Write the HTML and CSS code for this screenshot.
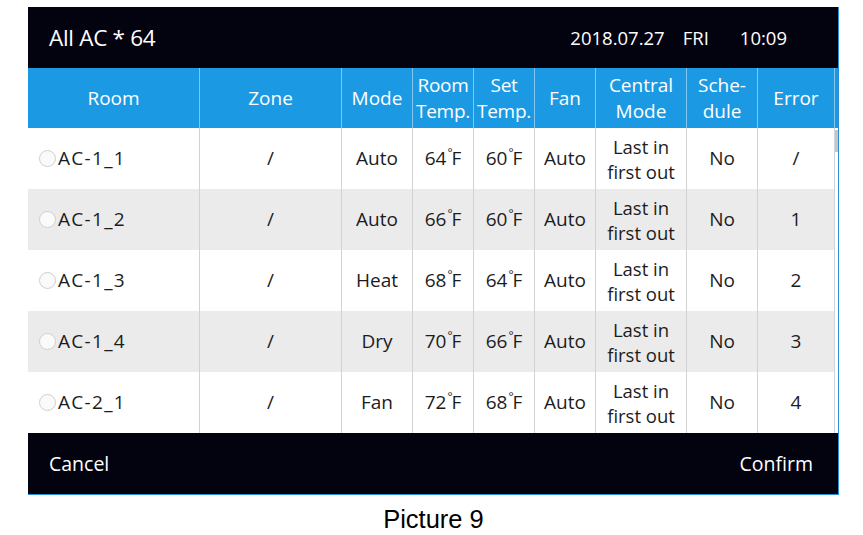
FILE: index.html
```html
<!DOCTYPE html>
<html>
<head>
<meta charset="utf-8">
<link rel="stylesheet" href="styles.css">
</head>
<body>
<div class="frame">
  <div class="topbar">
    <div class="title">All AC * 64</div>
    <div class="clock"><span class="date">2018.07.27</span><span class="day">FRI</span><span>10:09</span></div>
  </div>
  <div class="head">
    <div class="hc">Room</div>
    <div class="hc">Zone</div>
    <div class="hc">Mode</div>
    <div class="hc tight">Room<br>Temp.</div>
    <div class="hc tight">Set<br>Temp.</div>
    <div class="hc">Fan</div>
    <div class="hc">Central<br>Mode</div>
    <div class="hc">Sche-<br>dule</div>
    <div class="hc">Error</div>
    <div class="hc end"></div>
  </div>
  <div class="body">
    <div class="rows">
      <div class="row">
        <div class="c room"><span class="radio"></span>AC-1_1</div>
        <div class="c">/</div>
        <div class="c">Auto</div>
        <div class="c">64<span class="deg">°</span>F</div>
        <div class="c">60<span class="deg">°</span>F</div>
        <div class="c">Auto</div>
        <div class="c two">Last in<br>first out</div>
        <div class="c">No</div>
        <div class="c">/</div>
      </div>
      <div class="row alt">
        <div class="c room"><span class="radio"></span>AC-1_2</div>
        <div class="c">/</div>
        <div class="c">Auto</div>
        <div class="c">66<span class="deg">°</span>F</div>
        <div class="c">60<span class="deg">°</span>F</div>
        <div class="c">Auto</div>
        <div class="c two">Last in<br>first out</div>
        <div class="c">No</div>
        <div class="c">1</div>
      </div>
      <div class="row">
        <div class="c room"><span class="radio"></span>AC-1_3</div>
        <div class="c">/</div>
        <div class="c">Heat</div>
        <div class="c">68<span class="deg">°</span>F</div>
        <div class="c">64<span class="deg">°</span>F</div>
        <div class="c">Auto</div>
        <div class="c two">Last in<br>first out</div>
        <div class="c">No</div>
        <div class="c">2</div>
      </div>
      <div class="row alt">
        <div class="c room"><span class="radio"></span>AC-1_4</div>
        <div class="c">/</div>
        <div class="c">Dry</div>
        <div class="c">70<span class="deg">°</span>F</div>
        <div class="c">66<span class="deg">°</span>F</div>
        <div class="c">Auto</div>
        <div class="c two">Last in<br>first out</div>
        <div class="c">No</div>
        <div class="c">3</div>
      </div>
      <div class="row">
        <div class="c room"><span class="radio"></span>AC-2_1</div>
        <div class="c">/</div>
        <div class="c">Fan</div>
        <div class="c">72<span class="deg">°</span>F</div>
        <div class="c">68<span class="deg">°</span>F</div>
        <div class="c">Auto</div>
        <div class="c two">Last in<br>first out</div>
        <div class="c">No</div>
        <div class="c">4</div>
      </div>
    </div>
    <div class="scroll"><div class="thumb"></div></div>
  </div>
  <div class="footer">
    <div class="btn">Cancel</div>
    <div class="btn">Confirm</div>
  </div>
</div>
<div class="caption">Picture 9</div>
</body>
</html>
```
FILE: styles.css
```css
* { box-sizing: border-box; }
html, body { margin: 0; padding: 0; background: #fff; }
body { font-family: "Open Sans", "Noto Sans", sans-serif; color: #1c1c1c; }

.frame {
  width: 811px;
  margin: 7px 0 0 28px;
  border-right: 1px solid #2a8fd6;
  border-bottom: 1px solid #2a8fd6;
}

.topbar {
  height: 61px;
  background: #03020f;
  color: #fff;
  display: flex;
  align-items: center;
  justify-content: space-between;
  padding: 0 51px 0 21px;
}
.title { font-size: 22.5px; letter-spacing: -0.3px; }
.clock { display: flex; font-size: 18.5px; }
.date { margin-right: 18px; }
.day { margin-right: 31px; }

.head {
  height: 60px;
  background: #1b9ae3;
  color: #fff;
  display: grid;
  grid-template-columns: 172px 142px 71px 61px 61px 61px 91px 71px 77px 3px;
}
.hc {
  display: flex;
  align-items: center;
  justify-content: center;
  text-align: center;
  font-size: 19px;
  line-height: 26px;
  border-right: 1px solid rgba(255,255,255,0.45);
}
.hc.tight { letter-spacing: -0.3px; }
.hc.end { border-right: none; }

.body { display: flex; background: #fff; }
.rows { width: 807px; }
.row {
  height: 61px;
  display: grid;
  grid-template-columns: 172px 142px 71px 61px 61px 61px 91px 71px 77px;
  background: #fff;
}
.row.alt { background: #ebebeb; }
.c {
  display: flex;
  align-items: center;
  justify-content: center;
  text-align: center;
  font-size: 19px;
  line-height: 23px;
  border-right: 1px solid #d2d2d2;
}
.c.two { font-size: 18.5px; line-height: 25.5px; padding-top: 1px; }
.c.room { justify-content: flex-start; padding-left: 11px; letter-spacing: 1.3px; }
.radio {
  width: 17px;
  height: 17px;
  border: 1px solid #cfcfcf;
  border-radius: 50%;
  margin-right: 2px;
  background: #fafafa;
}
.deg { font-size: 12px; position: relative; top: -6px; margin: 0 -1px 0 1px; }

.scroll { width: 3px; position: relative; }
.thumb {
  position: absolute;
  left: 0;
  top: 2px;
  width: 3px;
  height: 22px;
  background: #c6c6c6;
}

.footer {
  height: 61px;
  background: #03020f;
  color: #fff;
  display: flex;
  align-items: center;
  justify-content: space-between;
  padding: 0 25px 0 21px;
  font-size: 19.5px;
}

.caption {
  text-align: center;
  font-family: "Liberation Sans", Arial, sans-serif;
  font-size: 25.5px;
  margin-top: 10px;
  color: #000;
  padding-left: 4px;
}
```
